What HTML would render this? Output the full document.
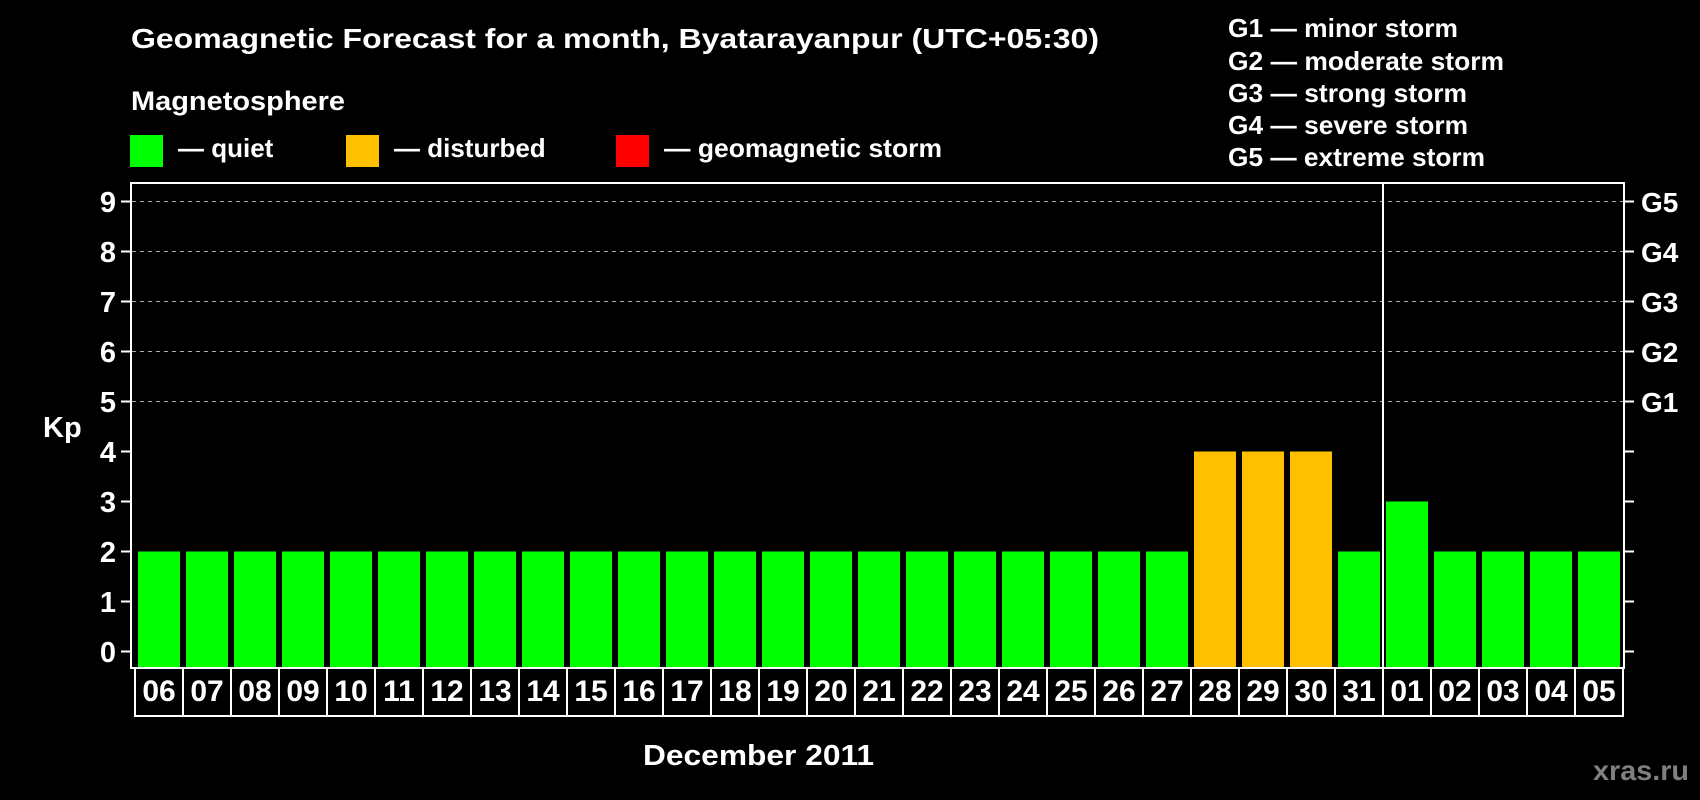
<!DOCTYPE html>
<html><head><meta charset="utf-8"><style>html,body{margin:0;padding:0;background:#000;width:1700px;height:800px;overflow:hidden}svg{display:block}</style></head><body>
<svg width="1700" height="800" xmlns="http://www.w3.org/2000/svg" font-family="'Liberation Sans', Arial, sans-serif" font-weight="bold" fill="#fff">
<rect width="1700" height="800" fill="#000"/>
<text x="131" y="48" font-size="28" textLength="968" lengthAdjust="spacingAndGlyphs">Geomagnetic Forecast for a month, Byatarayanpur (UTC+05:30)</text>
<text x="131" y="110" font-size="27" textLength="214" lengthAdjust="spacingAndGlyphs">Magnetosphere</text>
<rect x="130" y="135" width="33" height="32" fill="#00ff00"/>
<text x="178" y="157" font-size="26">— quiet</text>
<rect x="346" y="135" width="33" height="32" fill="#ffc000"/>
<text x="394" y="157" font-size="26">— disturbed</text>
<rect x="616" y="135" width="33" height="32" fill="#ff0000"/>
<text x="664" y="157" font-size="26" textLength="278" lengthAdjust="spacingAndGlyphs">— geomagnetic storm</text>
<g font-size="26">
<text x="1228" y="37" textLength="230" lengthAdjust="spacingAndGlyphs">G1 — minor storm</text>
<text x="1228" y="70" textLength="276" lengthAdjust="spacingAndGlyphs">G2 — moderate storm</text>
<text x="1228" y="102" textLength="239" lengthAdjust="spacingAndGlyphs">G3 — strong storm</text>
<text x="1228" y="134" textLength="240" lengthAdjust="spacingAndGlyphs">G4 — severe storm</text>
<text x="1228" y="166" textLength="257" lengthAdjust="spacingAndGlyphs">G5 — extreme storm</text>
</g>
<g stroke="#aaa" stroke-width="1" stroke-dasharray="4,4">
<line x1="132" x2="1624" y1="201.5" y2="201.5"/>
<line x1="132" x2="1624" y1="251.5" y2="251.5"/>
<line x1="132" x2="1624" y1="301.5" y2="301.5"/>
<line x1="132" x2="1624" y1="351.5" y2="351.5"/>
<line x1="132" x2="1624" y1="401.5" y2="401.5"/>
</g>
<g fill="#00ff00">
<rect x="138" y="551.5" width="42" height="116.5"/><rect x="186" y="551.5" width="42" height="116.5"/><rect x="234" y="551.5" width="42" height="116.5"/><rect x="282" y="551.5" width="42" height="116.5"/><rect x="330" y="551.5" width="42" height="116.5"/><rect x="378" y="551.5" width="42" height="116.5"/><rect x="426" y="551.5" width="42" height="116.5"/><rect x="474" y="551.5" width="42" height="116.5"/><rect x="522" y="551.5" width="42" height="116.5"/><rect x="570" y="551.5" width="42" height="116.5"/><rect x="618" y="551.5" width="42" height="116.5"/><rect x="666" y="551.5" width="42" height="116.5"/><rect x="714" y="551.5" width="42" height="116.5"/><rect x="762" y="551.5" width="42" height="116.5"/><rect x="810" y="551.5" width="42" height="116.5"/><rect x="858" y="551.5" width="42" height="116.5"/><rect x="906" y="551.5" width="42" height="116.5"/><rect x="954" y="551.5" width="42" height="116.5"/><rect x="1002" y="551.5" width="42" height="116.5"/><rect x="1050" y="551.5" width="42" height="116.5"/><rect x="1098" y="551.5" width="42" height="116.5"/><rect x="1146" y="551.5" width="42" height="116.5"/>
<rect x="1338" y="551.5" width="42" height="116.5"/><rect x="1386" y="501.5" width="42" height="166.5"/><rect x="1434" y="551.5" width="42" height="116.5"/><rect x="1482" y="551.5" width="42" height="116.5"/><rect x="1530" y="551.5" width="42" height="116.5"/><rect x="1578" y="551.5" width="42" height="116.5"/>
</g>
<g fill="#ffc000">
<rect x="1194" y="451.5" width="42" height="216.5"/><rect x="1242" y="451.5" width="42" height="216.5"/><rect x="1290" y="451.5" width="42" height="216.5"/>
</g>
<g font-size="30" text-anchor="middle">
<text x="159" y="701">06</text><text x="207" y="701">07</text><text x="255" y="701">08</text><text x="303" y="701">09</text><text x="351" y="701">10</text><text x="399" y="701">11</text><text x="447" y="701">12</text><text x="495" y="701">13</text><text x="543" y="701">14</text><text x="591" y="701">15</text><text x="639" y="701">16</text><text x="687" y="701">17</text><text x="735" y="701">18</text><text x="783" y="701">19</text><text x="831" y="701">20</text><text x="879" y="701">21</text><text x="927" y="701">22</text><text x="975" y="701">23</text><text x="1023" y="701">24</text><text x="1071" y="701">25</text><text x="1119" y="701">26</text><text x="1167" y="701">27</text><text x="1215" y="701">28</text><text x="1263" y="701">29</text><text x="1311" y="701">30</text><text x="1359" y="701">31</text><text x="1407" y="701">01</text><text x="1455" y="701">02</text><text x="1503" y="701">03</text><text x="1551" y="701">04</text><text x="1599" y="701">05</text>
</g>
<g fill="#fff">
<rect x="182" y="667" width="2" height="49"/><rect x="230" y="667" width="2" height="49"/><rect x="278" y="667" width="2" height="49"/><rect x="326" y="667" width="2" height="49"/><rect x="374" y="667" width="2" height="49"/><rect x="422" y="667" width="2" height="49"/><rect x="470" y="667" width="2" height="49"/><rect x="518" y="667" width="2" height="49"/><rect x="566" y="667" width="2" height="49"/><rect x="614" y="667" width="2" height="49"/><rect x="662" y="667" width="2" height="49"/><rect x="710" y="667" width="2" height="49"/><rect x="758" y="667" width="2" height="49"/><rect x="806" y="667" width="2" height="49"/><rect x="854" y="667" width="2" height="49"/><rect x="902" y="667" width="2" height="49"/><rect x="950" y="667" width="2" height="49"/><rect x="998" y="667" width="2" height="49"/><rect x="1046" y="667" width="2" height="49"/><rect x="1094" y="667" width="2" height="49"/><rect x="1142" y="667" width="2" height="49"/><rect x="1190" y="667" width="2" height="49"/><rect x="1238" y="667" width="2" height="49"/><rect x="1286" y="667" width="2" height="49"/><rect x="1334" y="667" width="2" height="49"/><rect x="1382" y="667" width="2" height="49"/><rect x="1430" y="667" width="2" height="49"/><rect x="1478" y="667" width="2" height="49"/><rect x="1526" y="667" width="2" height="49"/><rect x="1574" y="667" width="2" height="49"/><rect x="1622" y="667" width="2" height="50"/>
</g>
<rect x="130" y="182" width="2" height="487" fill="#fff"/>
<rect x="1623" y="182" width="2" height="487" fill="#fff"/>
<rect x="130" y="182" width="1495" height="2" fill="#fff"/>
<rect x="130" y="667" width="1495" height="2" fill="#fff"/>
<rect x="1382" y="182" width="2" height="486" fill="#fff"/>
<rect x="134" y="667" width="2" height="50" fill="#fff"/>
<rect x="134" y="715" width="1490" height="2" fill="#fff"/>
<g stroke="#fff" stroke-width="2">
<line x1="121" x2="131" y1="201.5" y2="201.5"/><line x1="121" x2="131" y1="251.5" y2="251.5"/><line x1="121" x2="131" y1="301.5" y2="301.5"/><line x1="121" x2="131" y1="351.5" y2="351.5"/><line x1="121" x2="131" y1="401.5" y2="401.5"/><line x1="121" x2="131" y1="451.5" y2="451.5"/><line x1="121" x2="131" y1="501.5" y2="501.5"/><line x1="121" x2="131" y1="551.5" y2="551.5"/><line x1="121" x2="131" y1="601.5" y2="601.5"/><line x1="121" x2="131" y1="651.5" y2="651.5"/>
<line x1="1624" x2="1634" y1="201.5" y2="201.5"/><line x1="1624" x2="1634" y1="251.5" y2="251.5"/><line x1="1624" x2="1634" y1="301.5" y2="301.5"/><line x1="1624" x2="1634" y1="351.5" y2="351.5"/><line x1="1624" x2="1634" y1="401.5" y2="401.5"/><line x1="1624" x2="1634" y1="451.5" y2="451.5"/><line x1="1624" x2="1634" y1="501.5" y2="501.5"/><line x1="1624" x2="1634" y1="551.5" y2="551.5"/><line x1="1624" x2="1634" y1="601.5" y2="601.5"/><line x1="1624" x2="1634" y1="651.5" y2="651.5"/>
</g>
<g font-size="29" text-anchor="end">
<text x="116" y="212">9</text><text x="116" y="262">8</text><text x="116" y="312">7</text><text x="116" y="362">6</text><text x="116" y="412">5</text><text x="116" y="462">4</text><text x="116" y="512">3</text><text x="116" y="562">2</text><text x="116" y="612">1</text><text x="116" y="662">0</text>
</g>
<g font-size="28">
<text x="1641" y="212">G5</text><text x="1641" y="262">G4</text><text x="1641" y="312">G3</text><text x="1641" y="362">G2</text><text x="1641" y="412">G1</text>
</g>
<text x="43" y="437" font-size="29">Kp</text>
<text x="643" y="765" font-size="29" textLength="231" lengthAdjust="spacingAndGlyphs">December 2011</text>
<text x="1593" y="780" font-size="28" fill="#808080" textLength="96" lengthAdjust="spacingAndGlyphs">xras.ru</text>
</svg>
</body></html>
